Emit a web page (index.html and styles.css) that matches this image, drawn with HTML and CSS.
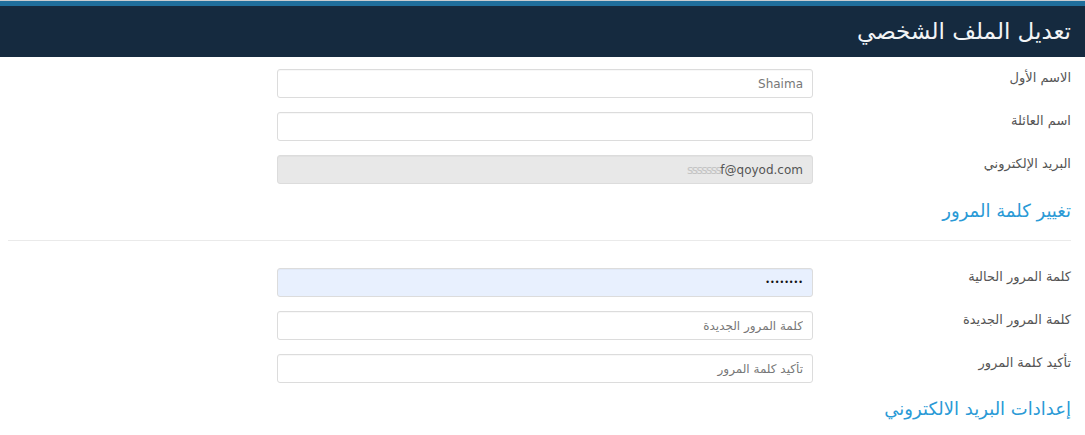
FILE: index.html
```html
<!DOCTYPE html>
<html lang="ar" dir="rtl">
<head>
<meta charset="utf-8">
<link rel="stylesheet" href="styles.css">
</head>
<body>
<div class="topline"></div>
<div class="strip"></div>
<header class="header"><h1 class="title">تعديل الملف الشخصي</h1></header>
<main class="form">
  <div class="row">
    <label class="label">الاسم الأول</label>
    <input class="field" type="text" value="Shaima">
  </div>
  <div class="row">
    <label class="label">اسم العائلة</label>
    <input class="field" type="text" value="">
  </div>
  <div class="row">
    <label class="label">البريد الإلكتروني</label>
    <div class="field disabled" dir="ltr"><span class="blur">sssssss</span>f@qoyod.com</div>
  </div>
  <h2 class="section">تغيير كلمة المرور</h2>
  <hr class="divider">
  <div class="row">
    <label class="label">كلمة المرور الحالية</label>
    <input class="field autofill" type="password" value="12345678">
  </div>
  <div class="row">
    <label class="label">كلمة المرور الجديدة</label>
    <input class="field" type="password" placeholder="كلمة المرور الجديدة">
  </div>
  <div class="row">
    <label class="label">تأكيد كلمة المرور</label>
    <input class="field" type="password" placeholder="تأكيد كلمة المرور">
  </div>
  <h2 class="section second">إعدادات البريد الالكتروني</h2>
</main>
</body>
</html>
```
FILE: styles.css
```css
* { box-sizing: border-box; }
html, body { margin: 0; padding: 0; background: #fff; }
body {
  font-family: "DejaVu Sans", "Noto Sans", sans-serif;
  color: #555;
  width: 1085px;
  height: 435px;
  overflow: hidden;
}
.topline { height: 1px; background: #c9cdd1; }
.strip { height: 5px; background: #1f6e9c; }
.header {
  background: #152a3f;
  height: 51px;
  padding: 0 14px;
  display: flex;
  align-items: center;
}
.title {
  margin: 0;
  font-weight: normal;
  font-size: 23px;
  color: #f2f4f6;
  line-height: 1;
}
.form {
  padding: 12px 14px 0 14px;
}
.row {
  display: grid;
  grid-template-columns: 258px 536px;
  column-gap: 0;
  margin-bottom: 14px;
}
.label {
  font-size: 13px;
  color: #555;
  padding-top: 1px;
  line-height: 16px;
}
.field {
  height: 29px;
  width: 536px;
  border: 1px solid #dcdcdc;
  border-radius: 3px;
  background: #fff;
  padding: 0 9px;
  font-family: "DejaVu Sans", "Noto Sans", sans-serif;
  font-size: 12px;
  color: #777;
  text-align: right;
  outline: none;
  box-shadow: inset 0 1px 1px rgba(0,0,0,0.03);
}
.field::placeholder { color: #777; }
.disabled {
  background: #e8e8e8;
  display: flex;
  align-items: center;
  justify-content: flex-end;
  color: #555;
}
.blur { color: #c4c4c4; letter-spacing: -1.5px; }
.autofill { background: #e8f0fe; color: #111; font-size: 8px; letter-spacing: 0; }
.section {
  margin: 16px 0 0 0;
  font-weight: normal;
  font-size: 18px;
  color: #2a9ad6;
  line-height: 22px;
}
.divider {
  border: 0;
  border-top: 1px solid #eaeaea;
  margin: 18px 0 27px -6px;
}
.second { margin-top: 15px; }
```
